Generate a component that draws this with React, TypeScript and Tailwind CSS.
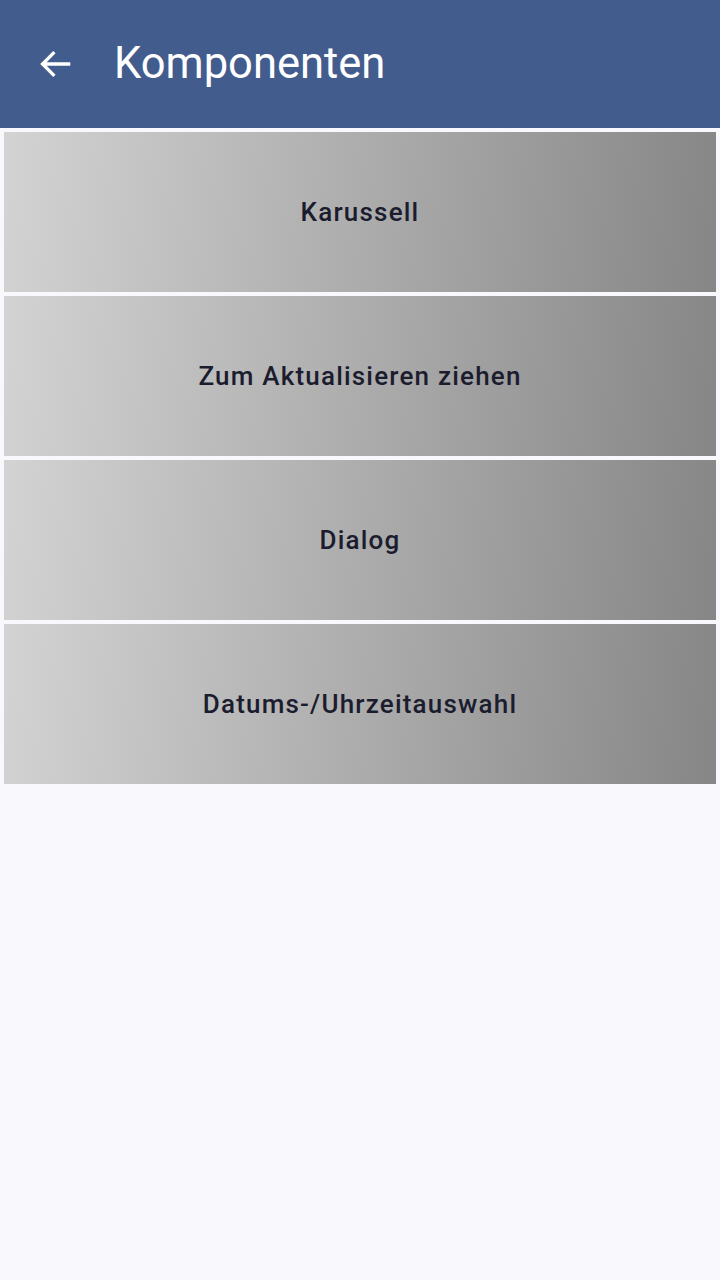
import React from 'react';

const ITEMS = ['Karussell', 'Zum Aktualisieren ziehen', 'Dialog', 'Datums-/Uhrzeitauswahl'];

const App: React.FC = () => {
  return (
    <div className="min-h-[1280px] w-[720px] bg-[#f8f8fd] font-['Roboto',sans-serif]">
      {/* App bar */}
      <div className="h-[128px] bg-[#425c8e] flex items-center pl-[37px] gap-[39px]">
        <svg className="w-[38px] h-[38px] text-white" viewBox="0 0 24 24" fill="none" stroke="currentColor">
          <path strokeWidth="2.1" d="M21 12H3.5M11 4.5L3.5 12l7.5 7.5" />
        </svg>
        <h1 className="text-[43.5px] text-white leading-none">Komponenten</h1>
      </div>

      <div className="flex flex-col gap-[4px] p-[4px]">
        {ITEMS.map((label) => (
          <button
            key={label}
            className="h-[160px] w-full flex items-center justify-center bg-[linear-gradient(95deg,#d3d3d3,#868686)]"
          >
            <span className="text-[26px] font-medium text-[#1b1c2e] tracking-[1.2px]">{label}</span>
          </button>
        ))}
      </div>
    </div>
  );
};

export default App;
